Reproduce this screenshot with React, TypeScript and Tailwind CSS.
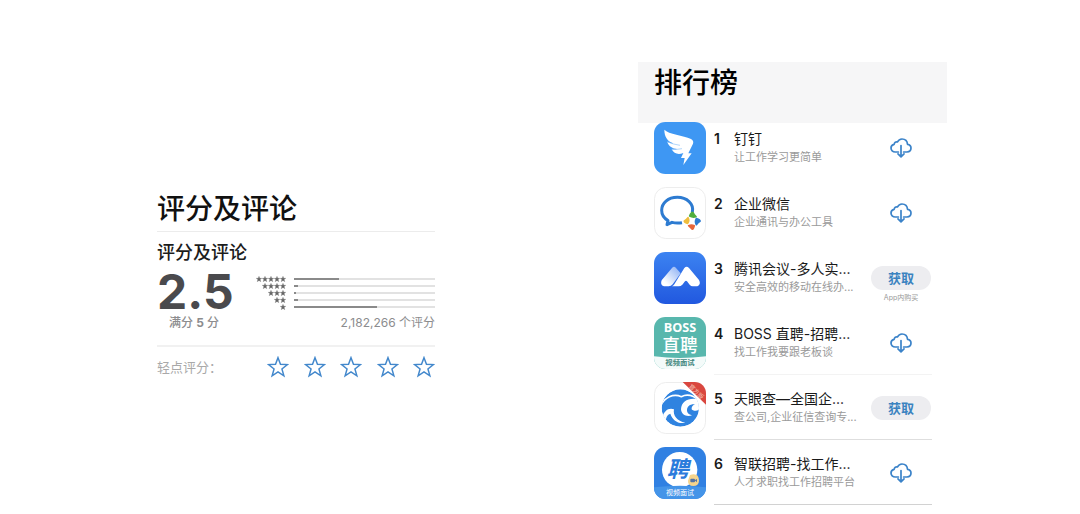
import type { ReactNode } from "react";

interface AppEntry {
  name: string;
  tagline: string;
  icon: ReactNode;
  owned: boolean;
  purchases?: boolean;
  divider?: string;
}

const STAR_PATH = "M12 1.8l2.7 7.3 7.6.3-6 4.8 2.1 7.5-6.4-4.3-6.4 4.3 2.1-7.5-6-4.8 7.6-.3z";

// Share of ratings per star level, five stars first
const ratingShares = [
  { stars: 5, percent: 32 },
  { stars: 4, percent: 3 },
  { stars: 3, percent: 2 },
  { stars: 2, percent: 3 },
  { stars: 1, percent: 59 },
];

function DingTalkIcon() {
  return (
    <svg viewBox="0 0 156 156" className="size-full" aria-hidden="true">
      <rect width="156" height="156" rx="34" fill="#3e97f3" />
      <path
        d="M31 23C44 37 88 40 111 51Q120 56 117 65L103 94H113L88 129L92 108H81L88 93C72 99 60 95 53 82Q62 84 70 81C55 80 45 74 40 60Q50 65 58 64C41 58 31 45 31 23Z"
        fill="#fff"
      />
      <path d="M40 59Q56 67 78 70M53 81Q67 84 84 80" stroke="#8cc1f8" strokeWidth="2" fill="none" />
    </svg>
  );
}

function WeComIcon() {
  return (
    <svg viewBox="0 0 156 156" className="size-full" aria-hidden="true">
      <rect x="1.5" y="1.5" width="153" height="153" rx="34" fill="#fff" stroke="#ededed" strokeWidth="3" />
      <path
        d="M115 76C121 50 98 31 70 31C42 31 23 48 23 70C23 84 30 94 42 101L39 113L54 106Q68 110 84 107"
        fill="none"
        stroke="#2d7bd1"
        strokeWidth="9"
        strokeLinejoin="round"
      />
      <g strokeWidth="5" strokeLinecap="round" strokeLinejoin="round">
        <path d="M107 87Q112 74 117 77Q120 84 126 89Q116 92 107 87Z" fill="#4fae3d" stroke="#4fae3d" />
        <path d="M127 95Q140 99 138 103Q132 106 127 113Q122 104 127 95Z" fill="#2d7bd1" stroke="#2d7bd1" />
        <path d="M121 116Q118 128 114 126Q110 122 104 116Q112 112 121 116Z" fill="#e8663a" stroke="#e8663a" />
        <path d="M101 109Q90 106 91 102Q97 99 102 92Q107 101 101 109Z" fill="#f0bd3c" stroke="#f0bd3c" />
      </g>
    </svg>
  );
}

function MeetingIcon() {
  return (
    <svg viewBox="0 0 156 156" className="size-full" aria-hidden="true">
      <defs>
        <linearGradient id="meeting-bg" x1="0" y1="0" x2="0" y2="1">
          <stop offset="0" stopColor="#3c83f1" />
          <stop offset="1" stopColor="#2158df" />
        </linearGradient>
        <linearGradient id="meeting-peak" x1="0" y1="1" x2="1" y2="0">
          <stop offset="0.2" stopColor="#fff" />
          <stop offset="1" stopColor="#86acf3" />
        </linearGradient>
      </defs>
      <rect width="156" height="156" rx="34" fill="url(#meeting-bg)" />
      <path d="M23 85L54 48Q60 41 66 48L80 64L56 97Q51 103 44 103H30Q17 99 23 85Z" fill="url(#meeting-peak)" />
      <path
        d="M54 103Q58 101 61 97L91 48Q98 41 105 48L135 84Q142 97 130 103H116Q111 103 107 98L99 88Q96 85 93 88L85 98Q80 103 74 103Z"
        fill="#fff"
      />
    </svg>
  );
}

function BossIcon() {
  return (
    <svg viewBox="0 0 156 156" className="size-full" aria-hidden="true">
      <defs>
        <clipPath id="boss-clip">
          <rect width="156" height="156" rx="34" />
        </clipPath>
      </defs>
      <g clipPath="url(#boss-clip)">
        <rect width="156" height="156" fill="#58b7ad" />
        <path d="M0 118Q78 128 156 118V156H0Z" fill="#f4fbfa" />
      </g>
      <g textAnchor="middle" className="font-['Open_Sans','Noto_Sans_CJK_SC',sans-serif]">
        <text x="78" y="44" fontSize="38" fontWeight="700" fill="#fff">BOSS</text>
        <text x="78" y="104" fontSize="53" fontWeight="500" fill="#fff">直聘</text>
        <text x="78" y="145" fontSize="22" fontWeight="700" fill="#43877f">视频面试</text>
      </g>
    </svg>
  );
}

function TianyanchaIcon() {
  return (
    <svg viewBox="0 0 156 156" className="size-full" aria-hidden="true">
      <defs>
        <clipPath id="tyc-clip">
          <rect width="156" height="156" rx="34" />
        </clipPath>
        <clipPath id="tyc-disc">
          <circle cx="79" cy="78" r="56" />
        </clipPath>
      </defs>
      <rect x="1.5" y="1.5" width="153" height="153" rx="34" fill="#fff" stroke="#ededed" strokeWidth="3" />
      <g clipPath="url(#tyc-disc)">
        <circle cx="79" cy="78" r="56" fill="#2f83e0" />
        <path d="M18 74C32 45 58 34 82 44C98 36 118 40 136 56" fill="none" stroke="#fff" strokeWidth="5" />
        <path d="M138 54C108 44 82 57 81 82C82 98 98 106 114 100C103 98 98 91 99 83C100 72 110 65 123 67C116 70 112 75 113 82C119 89 130 88 140 78Z" fill="#fff" />
        <path d="M24 108C30 86 44 76 60 82C56 101 70 118 94 122C72 127 55 114 49 95C40 97 34 108 36 124Z" fill="#fff" />
      </g>
      <path d="M86 0H156V68Z" fill="#d9473f" clipPath="url(#tyc-clip)" />
      <text
        x="126"
        y="35"
        transform="rotate(45 126 30)"
        textAnchor="middle"
        fontSize="18"
        fill="#f5c8bd"
        className="font-['Noto_Sans_CJK_SC',sans-serif]"
      >
        官方版
      </text>
    </svg>
  );
}

function ZhaopinIcon() {
  return (
    <svg viewBox="0 0 156 156" className="size-full" aria-hidden="true">
      <defs>
        <clipPath id="zhaopin-clip">
          <rect width="156" height="156" rx="34" />
        </clipPath>
      </defs>
      <g clipPath="url(#zhaopin-clip)">
        <rect width="156" height="156" fill="#3080e2" />
        <circle cx="77" cy="68" r="53" fill="#fff" />
        <path d="M0 121Q78 111 156 121V156H0Z" fill="#4494e8" />
      </g>
      <g textAnchor="middle" className="font-['Noto_Sans_CJK_SC',sans-serif]">
        <text x="71" y="91" fontSize="66" fontWeight="700" fontStyle="italic" fill="#2b7bdc">聘</text>
        <text x="78" y="144" fontSize="21" fill="#fff">视频面试</text>
      </g>
      <path d="M108 84Q134 76 135 101Q134 117 118 117Q101 116 102 101Z" fill="#f5d48c" />
      <rect x="109" y="95" width="14" height="11" rx="3" fill="#5273a5" />
      <path d="M122 100L129 96V106Z" fill="#5273a5" />
    </svg>
  );
}

function CloudDownloadIcon() {
  return (
    <svg
      viewBox="0 0 22 20"
      className="h-5 w-[22px]"
      fill="none"
      stroke="#3b83c9"
      strokeWidth="1.7"
      strokeLinecap="round"
      strokeLinejoin="round"
      aria-hidden="true"
    >
      <path d="M8.4 14H5.2C2.7 14 1 12.3 1 10.1C1 8.1 2.3 6.6 4.2 6.3C4.3 4.5 5.9 3.5 7.5 4C8.4 2 10 1 12 1C15.2 1 17.3 3.3 17.5 6.3C19.6 6.6 21 8.1 21 10.1C21 12.3 19.4 14 17 14H13.6" />
      <path d="M11 7.5V18.5M8 15.9L11 18.9L14 15.9" />
    </svg>
  );
}

const apps: AppEntry[] = [
  { name: "钉钉", tagline: "让工作学习更简单", icon: <DingTalkIcon />, owned: true },
  { name: "企业微信", tagline: "企业通讯与办公工具", icon: <WeComIcon />, owned: true },
  { name: "腾讯会议-多人实...", tagline: "安全高效的移动在线办...", icon: <MeetingIcon />, owned: false, purchases: true },
  { name: "BOSS 直聘-招聘...", tagline: "找工作我要跟老板谈", icon: <BossIcon />, owned: true, divider: "border-[#f3f3f3]" },
  { name: "天眼查—全国企...", tagline: "查公司,企业征信查询专...", icon: <TianyanchaIcon />, owned: false, divider: "border-[#dedede]" },
  { name: "智联招聘-找工作...", tagline: "人才求职找工作招聘平台", icon: <ZhaopinIcon />, owned: true, divider: "border-[#d2d2d2]" },
];

function RatingBars() {
  return (
    <div className="flex flex-1 flex-col gap-px pt-1">
      {ratingShares.map(({ stars, percent }) => (
        <div key={stars} className="flex h-1.5 items-center gap-2">
          <div className="flex w-8 justify-end">
            {Array.from({ length: stars }, (_, i) => (
              <svg key={i} viewBox="1 1 22 22" className="h-1.5 w-1.5 shrink-0" fill="#666" stroke="#666" aria-hidden="true">
                <path d={STAR_PATH} />
              </svg>
            ))}
          </div>
          <div className="h-0.5 flex-1 bg-[#e2e2e2]">
            <div className="h-full bg-[#8a8a8a]" style={{ width: `${percent}%` }} />
          </div>
        </div>
      ))}
    </div>
  );
}

function RatingsPanel() {
  return (
    <section className="mt-[189px] w-[278px]">
      <h1 className="border-b border-[#ececec] pb-px text-[28px] leading-[41px] font-medium text-[#111]">评分及评论</h1>
      <h2 className="mt-2 text-lg leading-[26px] font-medium text-[#1c1c1c]">评分及评论</h2>
      <div className="mt-1.5 flex justify-between gap-5">
        <div className="text-[48px] leading-10 font-bold text-[#4a4a4d]">2.5</div>
        <RatingBars />
      </div>
      <div className="flex justify-between text-xs leading-[22px] text-[#8c8c8e]">
        <span className="pl-3 font-medium">
          满分 <b>5</b> 分
        </span>
        <span>2,182,266 个评分</span>
      </div>
      <div className="mt-[11px] flex items-center justify-between border-t-2 border-[#f1f1f1] pt-[9px]">
        <span className="text-[13px] leading-5 text-[#a9a9a9]">轻点评分：</span>
        <div className="flex w-[168px] justify-between">
          {[1, 2, 3, 4, 5].map((n) => (
            <button key={n} type="button" aria-label={`${n} 星`} className="cursor-pointer">
              <svg viewBox="0 0 24 24" className="size-[22px]" fill="none" stroke="#4388cc" strokeWidth="1.6" aria-hidden="true">
                <path d={STAR_PATH} />
              </svg>
            </button>
          ))}
        </div>
      </div>
    </section>
  );
}

function AppRow({ app, rank }: { app: AppEntry; rank: number }) {
  return (
    <li className="flex h-[65px] items-start gap-2">
      <div className="size-[52px] shrink-0">{app.icon}</div>
      <div className={`flex h-[58px] min-w-0 flex-1 border-b ${app.divider ?? "border-transparent"}`}>
        <span className="w-5 shrink-0 pt-[7px] text-sm leading-5 font-semibold text-[#1a1a1a]">{rank}</span>
        <div className="min-w-0 flex-1 pt-[7px] whitespace-nowrap">
          <h3 className="text-sm leading-5 text-[#1a1a1a]">{app.name}</h3>
          <p className="text-[11px] leading-4 text-[#9a9a9a]">{app.tagline}</p>
        </div>
        <div className="flex w-[62px] shrink-0 flex-col items-center pt-3.5">
          {app.owned ? (
            <button type="button" aria-label={`下载 ${app.name}`} className="mt-0.5 cursor-pointer">
              <CloudDownloadIcon />
            </button>
          ) : (
            <button type="button" className="h-6 w-[60px] cursor-pointer rounded-full bg-[#ededf0] text-[13px] leading-6 font-bold text-[#3b83c0]">
              获取
            </button>
          )}
          {app.purchases && <small className="mt-0.5 text-[7px] leading-3 text-[#999]">App内购买</small>}
        </div>
      </div>
    </li>
  );
}

function ChartsPanel() {
  return (
    <section className="mt-[62px] w-[309px]">
      <header className="h-[61px] bg-[#f6f6f7] px-4">
        <h1 className="text-[28px] leading-[42px] font-medium text-black">排行榜</h1>
      </header>
      <ol className="-mt-px pr-[15px] pl-4">
        {apps.map((app, i) => (
          <AppRow key={app.name} app={app} rank={i + 1} />
        ))}
      </ol>
    </section>
  );
}

export default function App() {
  return (
    <main className="flex items-start justify-between bg-white pr-[133px] pl-[157px] font-['Inter','Noto_Sans_CJK_SC',sans-serif]">
      <RatingsPanel />
      <ChartsPanel />
    </main>
  );
}
